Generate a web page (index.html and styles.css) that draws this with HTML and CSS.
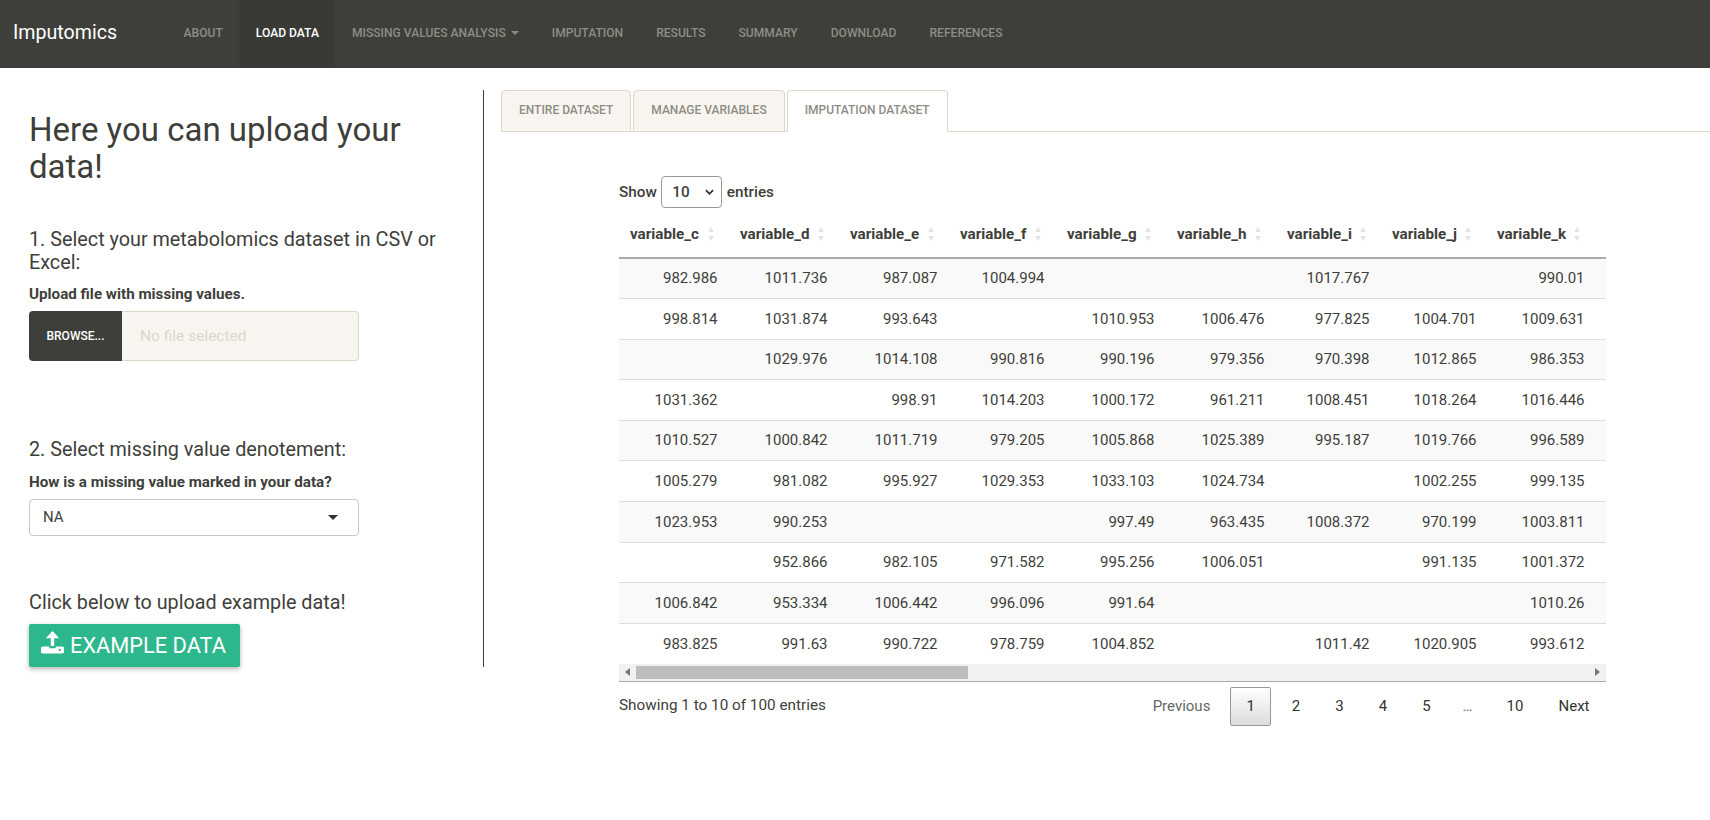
FILE: index.html
```html
<!DOCTYPE html>
<html lang="en">
<head>
    <meta charset="UTF-8">
    <title>Imputomics</title>
    <link rel="stylesheet" href="styles.css">
</head>
<body>

<nav class="navbar">
    <a class="brand">Imputomics</a>
    <ul class="nav-links">
        <li>About</li>
        <li class="active">Load data</li>
        <li>Missing values analysis <span class="caret"></span></li>
        <li>Imputation</li>
        <li>Results</li>
        <li>Summary</li>
        <li>Download</li>
        <li>References</li>
    </ul>
</nav>

<main class="page">
    <section class="sidebar">
        <h2>Here you can upload your data!</h2>

        <h4 class="step-one">1. Select your metabolomics dataset in CSV or Excel:</h4>
        <label class="field-label">Upload file with missing values.</label>
        <div class="file-input">
            <span class="browse-btn">Browse...</span>
            <span class="file-name">No file selected</span>
        </div>

        <h4 class="step-two">2. Select missing value denotement:</h4>
        <label class="field-label">How is a missing value marked in your data?</label>
        <div class="select-box">
            <span>NA</span>
            <span class="select-caret"></span>
        </div>

        <h4 class="step-three">Click below to upload example data!</h4>
        <button class="example-btn">
            <svg class="upload-icon" viewBox="0 0 23 23"><path fill-rule="evenodd" d="M11.500 0 4.800 7.200h5V15h3.400V7.200h5zM2.500 15.500h5.800v1.800h6.400v-1.800h5.800a3.200 3.200 0 0 1 0 7h-18a3.200 3.200 0 0 1 0-7zM18.700 17.800a1.200 1.200 0 1 0 .01 0z"/></svg>
            Example data
        </button>
    </section>

    <section class="content">
        <ul class="tabs">
            <li>Entire dataset</li>
            <li>Manage variables</li>
            <li class="active">Imputation dataset</li>
        </ul>

        <div class="table-panel">
            <div class="length-row">
                <span>Show</span>
                <span class="length-select">10 <svg viewBox="0 0 10 6"><path d="M1 1l4 4 4-4" fill="none" stroke="#333" stroke-width="2"/></svg></span>
                <span>entries</span>
            </div>

            <div class="table-scroll">
                <table id="dataTable">
                    <colgroup>
                        <col class="w110"><col class="w110"><col class="w110"><col class="w107"><col class="w110"><col class="w110"><col class="w105"><col class="w105"><col class="w120">
                    </colgroup>
                    <thead>
                        <tr>
                            <th>variable_c</th><th>variable_d</th><th>variable_e</th><th>variable_f</th><th>variable_g</th><th>variable_h</th><th>variable_i</th><th>variable_j</th><th class="last-col">variable_k</th>
                        </tr>
                    </thead>
                    <tbody>
                        <tr><td>982.986</td><td>1011.736</td><td>987.087</td><td>1004.994</td><td></td><td></td><td>1017.767</td><td></td><td>990.01</td></tr>
                        <tr><td>998.814</td><td>1031.874</td><td>993.643</td><td></td><td>1010.953</td><td>1006.476</td><td>977.825</td><td>1004.701</td><td>1009.631</td></tr>
                        <tr><td></td><td>1029.976</td><td>1014.108</td><td>990.816</td><td>990.196</td><td>979.356</td><td>970.398</td><td>1012.865</td><td>986.353</td></tr>
                        <tr><td>1031.362</td><td></td><td>998.91</td><td>1014.203</td><td>1000.172</td><td>961.211</td><td>1008.451</td><td>1018.264</td><td>1016.446</td></tr>
                        <tr><td>1010.527</td><td>1000.842</td><td>1011.719</td><td>979.205</td><td>1005.868</td><td>1025.389</td><td>995.187</td><td>1019.766</td><td>996.589</td></tr>
                        <tr><td>1005.279</td><td>981.082</td><td>995.927</td><td>1029.353</td><td>1033.103</td><td>1024.734</td><td></td><td>1002.255</td><td>999.135</td></tr>
                        <tr><td>1023.953</td><td>990.253</td><td></td><td></td><td>997.49</td><td>963.435</td><td>1008.372</td><td>970.199</td><td>1003.811</td></tr>
                        <tr><td></td><td>952.866</td><td>982.105</td><td>971.582</td><td>995.256</td><td>1006.051</td><td></td><td>991.135</td><td>1001.372</td></tr>
                        <tr><td>1006.842</td><td>953.334</td><td>1006.442</td><td>996.096</td><td>991.64</td><td></td><td></td><td></td><td>1010.26</td></tr>
                        <tr><td>983.825</td><td>991.63</td><td>990.722</td><td>978.759</td><td>1004.852</td><td></td><td>1011.42</td><td>1020.905</td><td>993.612</td></tr>
                    </tbody>
                </table>
            </div>

            <!-- fake scrollbar, the table is much wider than the panel -->
            <div class="scrollbar">
                <span class="arrow-left"></span>
                <span class="thumb"></span>
                <span class="arrow-right"></span>
            </div>

            <div class="table-footer">
                <span class="info">Showing 1 to 10 of 100 entries</span>
                <div class="pagination">
                    <a class="page-btn disabled">Previous</a>
                    <a class="page-btn current">1</a>
                    <a class="page-btn">2</a>
                    <a class="page-btn">3</a>
                    <a class="page-btn">4</a>
                    <a class="page-btn">5</a>
                    <span class="ellipsis">…</span>
                    <a class="page-btn">10</a>
                    <a class="page-btn">Next</a>
                </div>
            </div>
        </div>
    </section>
</main>

</body>
</html>
```

FILE: styles.css
```css
* {
    box-sizing: border-box;
}
body {
    margin: 0;
    font-family: Roboto, "Liberation Sans", sans-serif;
    font-size: 15px;
    line-height: 1.5;
    color: #3e3f3a;
    background: white;
    overflow: hidden;
}
ul {
    list-style: none;
    margin: 0;
    padding: 0;
}

/* Navbar */
.navbar {
    display: flex;
    align-items: center;
    height: 68px;
    background-color: #3e3f3a;
}
.brand {
    width: 167px;
    padding-left: 13px;
    padding-bottom: 2px;
    font-size: 19.6px;
    color: white;
}
.nav-links {
    display: flex;
    height: 100%;
}
.nav-links li {
    display: flex;
    align-items: center;
    gap: 5px;
    padding: 0 16.5px 2px;
    font-size: 12.1px;
    font-weight: 500;
    text-transform: uppercase;
    color: #8e8c84;
}
.nav-links li.active {
    background-color: #393a35;
    color: white;
}
.caret {
    border-top: 4px solid #8e8c84;
    border-left: 4px solid transparent;
    border-right: 4px solid transparent;
}

/* Layout */
.page {
    display: flex;
    padding-top: 22px;
}
.sidebar {
    width: 484px;
    height: 577px;
    padding-left: 29px;
    padding-right: 40px;
    border-right: 1px solid #3e3f3a;
    flex-shrink: 0;
}
.content {
    flex: 1;
    margin-left: 17px;
}

/* Sidebar */
h2 {
    margin: 21px 0 0;
    font-size: 33px;
    font-weight: 400;
    line-height: 37px;
}
h4 {
    margin: 0;
    font-size: 19.8px;
    font-weight: 400;
    line-height: 23px;
}
.step-one {
    margin-top: 43px;
}
.step-two {
    margin-top: 77px;
}
.step-three {
    margin-top: 55px;
}
.field-label {
    display: block;
    margin-top: 10px;
    font-size: 15.2px;
    font-weight: 700;
    line-height: 20px;
}
.step-two + .field-label {
    margin-top: 11px;
}
.file-input {
    display: flex;
    width: 330px;
    height: 50px;
    margin-top: 7px;
}
.browse-btn {
    display: flex;
    align-items: center;
    justify-content: center;
    width: 93px;
    background-color: #3e3f3a;
    color: white;
    font-size: 12px;
    font-weight: 500;
    text-transform: uppercase;
    border-radius: 4px 0 0 4px;
}
.file-name {
    flex: 1;
    display: flex;
    align-items: center;
    padding-left: 18px;
    padding-top: 2px;
    background-color: #f8f5f0;
    border: 1px solid #dfd7ca;
    border-left: none;
    border-radius: 0 4px 4px 0;
    color: #dfd7ca;
    font-size: 15.5px;
}
.select-box {
    display: flex;
    align-items: center;
    justify-content: space-between;
    width: 330px;
    height: 37px;
    margin-top: 7px;
    padding: 0 20px 1px 13px;
    border: 1px solid #c8c8c8;
    border-radius: 4px;
    font-size: 15px;
}
.select-caret {
    border-top: 5px solid #333;
    border-left: 5px solid transparent;
    border-right: 5px solid transparent;
}
.example-btn {
    display: flex;
    align-items: center;
    gap: 6px;
    width: 211px;
    height: 43px;
    margin-top: 10px;
    padding: 0 0 0 12px;
    background-color: #2cb88c;
    color: white;
    border: none;
    border-radius: 2px;
    box-shadow: 0 2px 5px rgba(0, 0, 0, 0.3);
    font-family: inherit;
    font-size: 21.8px;
    text-transform: uppercase;
}
.upload-icon {
    width: 23px;
    height: 23px;
    fill: white;
    margin-top: -7px;
}

/* Tabs */
.tabs {
    display: flex;
    gap: 2px;
    height: 42px;
    border-bottom: 1px solid #dfd7ca;
}
.tabs li {
    height: 42px;
    padding: 0 17px;
    line-height: 39px;
    font-size: 12px;
    font-weight: 500;
    text-transform: uppercase;
    color: #8e8c84;
    background-color: #f8f5f0;
    border: 1px solid #dfd7ca;
    border-radius: 4px 4px 0 0;
}
.tabs li.active {
    background-color: white;
    border-bottom-color: white;
}

/* Datatable */
.table-panel {
    width: 987px;
    margin-left: 118px;
}
.length-row {
    display: flex;
    align-items: center;
    gap: 4.5px;
    height: 32px;
    margin-top: 44px;
    font-size: 15.3px;
    font-weight: 500;
}
.length-select {
    display: flex;
    align-items: center;
    justify-content: space-between;
    width: 61px;
    height: 32px;
    padding: 0 7px 0 10px;
    border: 1px solid #999;
    border-radius: 4px;
}
.length-select svg {
    width: 9px;
    height: 6px;
}
.table-scroll {
    overflow: hidden;
    margin-top: 6px;
}
table {
    table-layout: fixed;
    width: 987px;
    border-collapse: collapse;
}
.w105 { width: 105px; }
.w107 { width: 107px; }
.w110 { width: 110px; }
.w120 { width: 120px; }
th {
    position: relative;
    height: 44px;
    padding: 0 0 3px 11px;
    text-align: left;
    font-weight: 700;
    font-size: 15.2px;
    border-bottom: 2px solid #aaa;
}
/* sort arrows */
th::before, th::after {
    content: "";
    position: absolute;
    right: 15px;
    border-left: 3.5px solid transparent;
    border-right: 3.5px solid transparent;
}
th::before {
    top: 13px;
    border-bottom: 5px solid #e4e4e4;
}
th::after {
    top: 22px;
    border-top: 5px solid #e4e4e4;
}
th.last-col::before, th.last-col::after {
    right: 26px;
}
td {
    height: 40.6px;
    padding: 0 11.5px 0 0;
    text-align: right;
    border-top: 1px solid #ddd;
}
tbody tr:first-child td {
    border-top: none;
}
tbody tr td:nth-child(8) {
    padding-right: 9.5px;
}
tbody tr td:last-child {
    padding-right: 21.5px;
}
tbody tr:nth-child(odd) {
    background-color: #f9f9f9;
}
.scrollbar {
    display: flex;
    align-items: center;
    height: 18px;
    background-color: #f1f1f1;
    border-bottom: 1px solid #aaa;
    margin-top: 0;
    padding: 0 6px;
}
.arrow-left {
    border-right: 5px solid #777;
    border-top: 4px solid transparent;
    border-bottom: 4px solid transparent;
}
.arrow-right {
    margin-left: auto;
    border-left: 5px solid #777;
    border-top: 4px solid transparent;
    border-bottom: 4px solid transparent;
}
.thumb {
    width: 332px;
    height: 13px;
    margin-left: 6px;
    background-color: #bdbdbd;
}
.table-footer {
    display: flex;
    justify-content: space-between;
    align-items: center;
    margin-top: 5px;
}
.info {
    padding-bottom: 2px;
    font-size: 15.3px;
}
.pagination {
    display: flex;
    align-items: center;
}
.page-btn {
    margin-left: 2px;
    padding: 7.5px 15.500px;
    border: 1px solid transparent;
    border-radius: 2px;
    color: #333;
}
.page-btn.disabled {
    margin-right: 1px;
    color: #666;
}
.page-btn.current {
    margin-right: 2px;
    border-color: #979797;
    background: linear-gradient(to bottom, white 0%, #dcdcdc 100%);
}
.ellipsis {
    padding: 0 15.500px;
    color: #666;
}
```
